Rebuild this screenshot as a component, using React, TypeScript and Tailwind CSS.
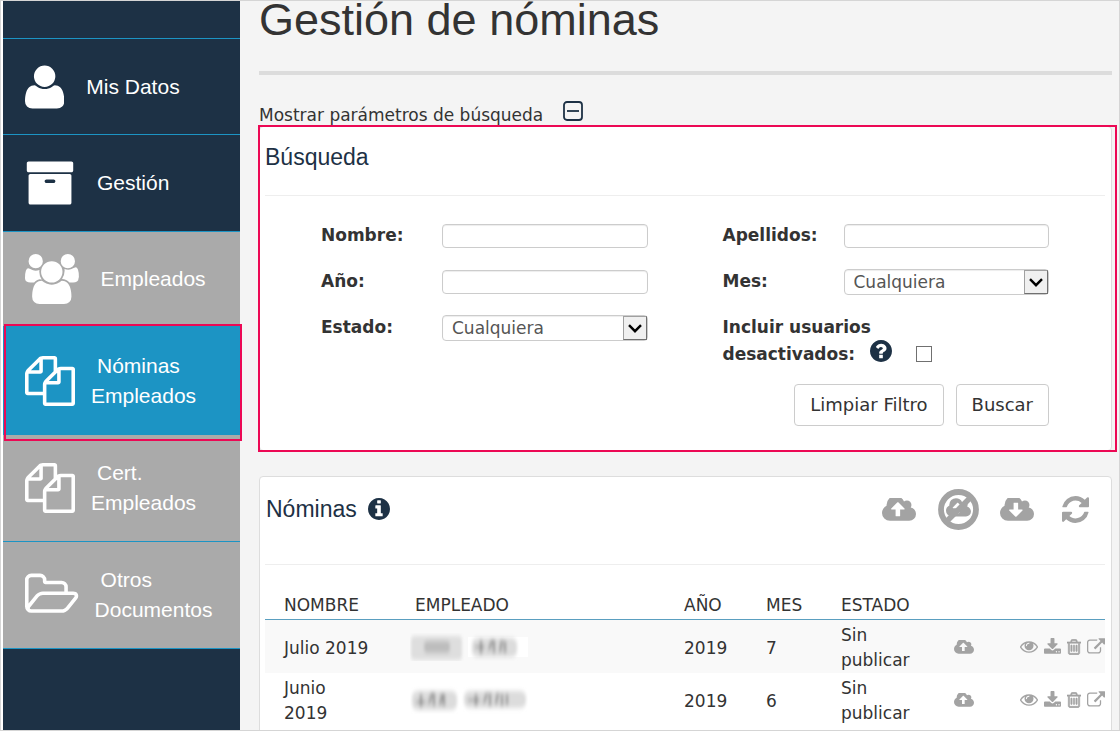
import React from "react";

type GlyphProps = { box?: string; d: string; className?: string };

function Glyph({ box = "0 0 1792 1792", d, className }: GlyphProps) {
  return (
    <svg viewBox={box} fill="currentColor" aria-hidden="true" className={className}>
      <path d={d} />
    </svg>
  );
}

const CLOUD =
  "m640 288q0 159-112.5 271.5t-271.5 112.5h-1088q-185 0-316.5-131.5t-131.5-316.5q0-130 70-240t188-165q-2-30-2-43 0-212 150-362t362-150q156 0 285.5 87t188.5 231q71-62 166-62 106 0 181 75t75 181q0 76-41 138 130 31 213.5 135.5t83.5 238.5z";
const DISC =
  "q0 209-103 385.5t-279.5 279.5-385.5 103-385.5-103-279.5-279.5-103-385.5 103-385.5 279.5-279.5 385.5-103 385.5 103 279.5 279.5 103 385.5z";

const paths = {
  user: "M1600 1405q0 120-73 189.5t-194 69.5h-874q-121 0-194-69.5t-73-189.5q0-53 3.5-103.5t14-109 26.5-108.5 43-97.5 62-81 85.5-53.5 111.5-20q9 0 42 21.5t74.5 48 108 48 133.5 21.5 133.5-21.5 108-48 74.5-48 42-21.5q61 0 111.5 20t85.5 53.5 62 81 43 97.5 26.5 108.5 14 109 3.5 103.5zm-320-893q0 159-112.5 271.5t-271.5 112.5-271.5-112.5-112.5-271.5 112.5-271.5 271.5-112.5 271.5 112.5 112.5 271.5z",
  archive:
    "M1088 832q0-26-19-45t-45-19h-256q-26 0-45 19t-19 45 19 45 45 19h256q26 0 45-19t19-45zm576-192v960q0 26-19 45t-45 19h-1408q-26 0-45-19t-19-45v-960q0-26 19-45t45-19h1408q26 0 45 19t19 45zm64-448v256q0 26-19 45t-45 19h-1536q-26 0-45-19t-19-45v-256q0-26 19-45t45-19h1536q26 0 45 19t19 45z",
  users:
    "M593 896q-162 5-265 128h-134q-82 0-138-40.5t-56-118.5q0-353 124-353 6 0 43.5 21t97.5 42.5 119 21.5q67 0 133-23-5 37-5 66 0 159 93 293zm1071 637q0 120-73 189.5t-194 69.5h-874q-121 0-194-69.5t-73-189.5q0-53 3.5-103.5t14-109 26.5-108.5 43-97.5 62-81 85.5-53.5 111.5-20q10 0 43 21.5t73 48 107 48 135 21.5 135-21.5 107-48 73-48 43-21.5q61 0 111.5 20t85.5 53.5 62 81 43 97.5 26.5 108.5 14 109 3.5 103.5zm-1024-1277q0 106-75 181t-181 75-181-75-75-181 75-181 181-75 181 75 75 181zm704 384q0 159-112.5 271.5t-271.5 112.5-271.5-112.5-112.5-271.5 112.5-271.5 271.5-112.5 271.5 112.5 112.5 271.5zm576 225q0 78-56 118.5t-138 40.5h-134q-103-123-265-128 93-134 93-293 0-29-5-66 66 23 133 23 59 0 119-21.5t97.5-42.5 43.5-21q124 0 124 353zm-128-609q0 106-75 181t-181 75-181-75-75-181 75-181 181-75 181 75 75 181z",
  files:
    "M1696 384q40 0 68 28t28 68v1216q0 40-28 68t-68 28h-960q-40 0-68-28t-28-68v-288h-544q-40 0-68-28t-28-68v-672q0-40 20-88t48-76l408-408q28-28 76-48t88-20h416q40 0 68 28t28 68v328q68-40 128-40h416zm-544 213l-299 299h299v-299zm-640-384l-299 299h299v-299zm196 647l316-316v-416h-384v416q0 40-28 68t-68 28h-416v640h512v-256q0-40 20-88t48-76zm956 804v-1152h-384v416q0 40-28 68t-68 28h-416v640h896z",
  folder:
    "M1845 931q0-35-53-35h-1088q-40 0-85.5 21.5t-71.5 52.5l-294 363q-18 24-18 40 0 35 53 35h1088q40 0 86-22t71-53l294-363q18-22 18-39zm-1141-163h768v-160q0-40-28-68t-68-28h-576q-40 0-68-28t-28-68v-64q0-40-28-68t-68-28h-320q-40 0-68 28t-28 68v853l256-315q44-53 116-87.5t140-34.5zm1269 163q0 62-46 120l-295 363q-43 53-116 87.5t-140 34.5h-1088q-92 0-158-66t-66-158v-960q0-92 66-158t158-66h320q92 0 158 66t66 158v32h544q92 0 158 66t66 158v160h192q54 0 99 24.5t67 70.5q15 32 15 68z",
  cloudUp:
    "M1280 864q0-14-9-23l-352-352q-9-9-23-9t-23 9l-351 351q-10 12-10 24 0 14 9 23t23 9h224v352q0 13 9.5 22.5t22.5 9.5h192q13 0 22.5-9.5t9.5-22.5v-352h224q13 0 22.5-9.5t9.5-22.5z" +
    CLOUD,
  cloudDown:
    "M1280 928q0-14-9-23t-23-9h-224v-352q0-13-9.5-22.5t-22.5-9.5h-192q-13 0-22.5 9.5t-9.5 22.5v352h-224q-13 0-22.5 9.5t-9.5 22.5q0 14 9 23l352 352q9 9 23 9t23-9l351-351q10-12 10-24zm0-64" +
    CLOUD,
  refresh:
    "M1639 1056q0 5-1 7-64 268-268 434.5t-478 166.5q-146 0-282.5-55t-243.5-157l-129 129q-19 19-45 19t-45-19-19-45v-448q0-26 19-45t45-19h448q26 0 45 19t19 45-19 45l-137 137q71 66 161 102t187 36q134 0 250-65t186-179q11-17 53-117 8-23 30-23h192q13 0 22.5 9.5t9.5 22.5zm25-800v448q0 26-19 45t-45 19h-448q-26 0-45-19t-19-45 19-45l138-138q-148-137-349-137-134 0-250 65t-186 179q-11 17-53 117-8 23-30 23h-199q-13 0-22.5-9.5t-9.5-22.5v-7q65-268 270-434.5t480-166.5q146 0 284 55.5t245 156.5l130-129q19-19 45-19t45 19 19 45z",
  info:
    "M1152 1376v-160q0-14-9-23t-23-9h-96v-512q0-14-9-23t-23-9h-320q-14 0-23 9t-9 23v160q0 14 9 23t23 9h96v320h-96q-14 0-23 9t-9 23v160q0 14 9 23t23 9h448q14 0 23-9t9-23zm-128-896v-160q0-14-9-23t-23-9h-192q-14 0-23 9t-9 23v160q0 14 9 23t23 9h192q14 0 23-9t9-23zm640 416" +
    DISC,
  question:
    "M1024 1376v-192q0-14-9-23t-23-9h-192q-14 0-23 9t-9 23v192q0 14 9 23t23 9h192q14 0 23-9t9-23zm256-672q0-88-55.5-163t-138.5-116-170-41q-243 0-371 213-15 24 8 42l132 100q7 6 19 6 16 0 25-12 53-68 86-92 34-24 86-24 48 0 85.5 26t37.5 59q0 38-20 61t-68 45q-63 28-115.5 86.5t-52.5 125.5v36q0 14 9 23t23 9h192q14 0 23-9t9-23q0-19 21.5-49.5t54.5-49.5q32-18 49-28.5t46-35 44.5-48 28-60.5 12.5-81zm384 192" +
    DISC,
  eye: "M1664 960q-152-236-381-353 61 104 61 225 0 185-131.5 316.5t-316.5 131.5-316.5-131.5-131.5-316.5q0-121 61-225-229 117-381 353 133 205 333.5 326.5t434.5 121.5 434.5-121.5 333.5-326.5zm-720-384q0-20-14-34t-34-14q-125 0-214.5 89.5t-89.5 214.5q0 20 14 34t34 14 34-14 14-34q0-86 61-147t147-61q20 0 34-14t14-34zm848 384q0 34-20 69-140 230-376.5 368.5t-499.5 138.5-499.5-139-376.5-368q-20-35-20-69t20-69q140-229 376.5-368t499.5-139 499.5 139 376.5 368q20 35 20 69z",
  download:
    "M1344 1344q0-26-19-45t-45-19-45 19-19 45 19 45 45 19 45-19 19-45zm256 0q0-26-19-45t-45-19-45 19-19 45 19 45 45 19 45-19 19-45zm128-224v320q0 40-28 68t-68 28h-1472q-40 0-68-28t-28-68v-320q0-40 28-68t68-28h465l135 136q58 56 136 56t136-56l136-136h464q40 0 68 28t28 68zm-325-569q17 41-14 70l-448 448q-18 19-45 19t-45-19l-448-448q-31-29-14-70 17-39 59-39h256v-448q0-26 19-45t45-19h256q26 0 45 19t19 45v448h256q42 0 59 39z",
  trash:
    "M704 736v576q0 14-9 23t-23 9h-64q-14 0-23-9t-9-23v-576q0-14 9-23t23-9h64q14 0 23 9t9 23zm256 0v576q0 14-9 23t-23 9h-64q-14 0-23-9t-9-23v-576q0-14 9-23t23-9h64q14 0 23 9t9 23zm256 0v576q0 14-9 23t-23 9h-64q-14 0-23-9t-9-23v-576q0-14 9-23t23-9h64q14 0 23 9t9 23zm128 724v-948h-896v948q0 22 7 40.5t14.5 27 10.5 8.5h832q3 0 10.5-8.5t14.5-27 7-40.5zm-672-1076h448l-48-117q-7-9-17-11h-317q-10 2-17 11zm928 32v64q0 14-9 23t-23 9h-96v948q0 83-47 143.5t-113 60.5h-832q-66 0-113-58.5t-47-141.5v-952h-96q-14 0-23-9t-9-23v-64q0-14 9-23t23-9h309l70-167q15-37 54-63t79-26h320q40 0 79 26t54 63l70 167h309q14 0 23 9t9 23z",
  external:
    "M1408 928v320q0 119-84.5 203.5t-203.5 84.5h-832q-119 0-203.5-84.5t-84.5-203.5v-832q0-119 84.5-203.5t203.5-84.5h704q14 0 23 9t9 23v64q0 14-9 23t-23 9h-704q-66 0-113 47t-47 113v832q0 66 47 113t113 47h832q66 0 113-47t47-113v-320q0-14 9-23t23-9h64q14 0 23 9t9 23zm384-864v512q0 26-19 45t-45 19-45-19l-176-176-652 652q-10 10-23 10t-23-10l-114-114q-10-10-10-23t10-23l652-652-176-176q-19-19-19-45t19-45 45-19h512q26 0 45 19t19 45z",
};

type NavProps = {
  icon: string;
  box?: string;
  lines: string[];
  className: string;
  children?: React.ReactNode;
};

function NavItem({ icon, box, lines, className, children }: NavProps) {
  return (
    <li className={`relative flex ${className}`}>
      <a href="#" className="flex w-full items-center gap-4 pl-[22px]">
        <Glyph d={icon} box={box} className="h-[50px] w-auto shrink-0" />
        <span className="indent-[6px] text-[21px] leading-[30px] text-white">
          {lines.map((line) => (
            <span key={line} className="block not-first:indent-0">
              {line}
            </span>
          ))}
        </span>
      </a>
      {children}
    </li>
  );
}

function Field({ label, id, children }: { label: string; id: string; children: React.ReactNode }) {
  return (
    <div className="grid min-h-[26px] grid-cols-[121px_minmax(0,1fr)] items-center">
      <label htmlFor={id} className="pb-[2px] leading-6 font-bold">
        {label}
      </label>
      {children}
    </div>
  );
}

function TextField({ label, id }: { label: string; id: string }) {
  return (
    <Field label={label} id={id}>
      <input
        id={id}
        type="text"
        className="h-6 w-full rounded border border-[#ccc] bg-white px-2 shadow-[inset_0_1px_1px_rgba(0,0,0,0.075)]"
      />
    </Field>
  );
}

function SelectField({ label, id }: { label: string; id: string }) {
  return (
    <Field label={label} id={id}>
      <div className="relative">
        <select
          id={id}
          className="block h-[26px] w-full appearance-none rounded border border-[#ccc] bg-white pl-[9px] leading-[24px] text-[#555] shadow-[inset_0_1px_1px_rgba(0,0,0,0.075)]"
        >
          <option>Cualquiera</option>
        </select>
        <span className="pointer-events-none absolute inset-y-px right-px flex w-6 items-center justify-center border border-[#707070] border-t-[#a0a0a0] border-l-[#a0a0a0] bg-[#f0f0f0]">
          <svg viewBox="0 0 14 9" className="w-[14px]" aria-hidden="true">
            <path d="M1 1.2 7 7.2 13 1.2" fill="none" stroke="#000" strokeWidth="2.4" />
          </svg>
        </span>
      </div>
    </Field>
  );
}

function Smudge({ id, alt }: { id: string; alt?: boolean }) {
  return (
    <svg viewBox="0 0 118 28" className="-ml-[5px] h-7 w-[118px]" aria-hidden="true">
      <defs>
        <filter id={id} x="-20%" y="-40%" width="140%" height="180%">
          <feGaussianBlur stdDeviation="1.6 2.4" />
        </filter>
      </defs>
      {!alt && <rect x="58" y="4" width="60" height="20" fill="#fff" />}
      <g filter={`url(#${id})`}>
        {alt ? (
          <>
            <rect x="2" y="5" width="45" height="19" rx="6" fill="#dcdcdc" />
            <rect x="54" y="5" width="62" height="17" rx="6" fill="#dcdcdc" />
            <path d="M11 8v13M6 16h10M19 18l3-11M24 7v13M30 19l2-11M34 8v12M66 8v12M58 14h12M74 17l3-10M80 7v13M86 18l2-11M92 8v12M97 8v11" fill="none" stroke="#808080" strokeWidth="2" />
          </>
        ) : (
          <>
            <rect x="1" y="3" width="51" height="24" rx="4" fill="#dedede" />
            <rect x="14" y="8" width="26" height="12" rx="4" fill="#bdbdbd" />
            <rect x="62" y="5" width="45" height="19" rx="6" fill="#dcdcdc" />
            <path d="M71 7v14M65 14h10M79 17l3-10M84 7v13M90 19l2-12M95 8v12" fill="none" stroke="#808080" strokeWidth="2" />
          </>
        )}
      </g>
    </svg>
  );
}

function IconButton({ label, children }: { label: string; children: React.ReactNode }) {
  return (
    <button type="button" aria-label={label} className="block shrink-0">
      {children}
    </button>
  );
}

const rows = [
  { name: "Julio 2019", year: "2019", month: "7", status: "Sin publicar" },
  { name: "Junio 2019", year: "2019", month: "6", status: "Sin publicar" },
];

export default function App() {
  return (
    <div className="flex h-screen overflow-hidden border border-[#d5d5d5] bg-white pl-[2px] font-['Liberation_Sans',Arial,sans-serif]">
      <nav className="w-[237px] shrink-0 bg-[#1d3145] text-white">
        <div className="h-[38px] border-b border-[#1c94c4]" />
        <ul>
          <NavItem icon={paths.user} box="192 0 1408 1792" lines={["Mis Datos"]} className="min-h-24 border-b border-[#1c94c4]" />
          <NavItem icon={paths.archive} lines={["Gestión"]} className="min-h-[97px] border-b border-[#1c94c4]" />
          <NavItem icon={paths.users} box="0 0 1920 1792" lines={["Empleados"]} className="min-h-[94px] bg-[#aaa]" />
          <NavItem icon={paths.files} lines={["Nóminas", "Empleados"]} className="z-10 min-h-[109px] bg-[#1c94c4]">
            <span className="pointer-events-none absolute -top-[2px] -right-[2px] -bottom-[6px] left-px border-2 border-[#ec0854]" />
          </NavItem>
          <NavItem icon={paths.files} lines={["Cert.", "Empleados"]} className="min-h-[107px] border-b border-[#1c94c4] bg-[#aaa]" />
          <NavItem icon={paths.folder} box="64 0 1920 1792" lines={["Otros", "Documentos"]} className="min-h-[107px] border-b border-[#1c94c4] bg-[#aaa]" />
        </ul>
      </nav>

      <main className="min-w-0 flex-1 bg-[#f4f4f4] pr-[7px] pl-[19px] font-['DejaVu_Sans',Verdana,sans-serif] text-[17px] text-[#333]">
        <h1 className="border-b-4 border-[#dcdcdc] pb-8 font-['Liberation_Sans',Arial,sans-serif] text-[45px] leading-[38px]">
          Gestión de nóminas
        </h1>

        <div className="flex h-[51px] items-end gap-5 pb-px">
          <span className="leading-[20px]">Mostrar parámetros de búsqueda</span>
          <button type="button" aria-label="Ocultar parámetros" className="mb-1 text-[#1d3145]">
            <svg viewBox="0 0 20 20" className="block size-5" fill="none" stroke="currentColor" aria-hidden="true">
              <rect x="1" y="1" width="18" height="18" rx="3" strokeWidth="1.8" />
              <path d="M4 10h12" strokeWidth="1.8" />
            </svg>
          </button>
        </div>

        <section className="relative rounded border border-[#ddd] bg-white pr-[6px] pb-[24px] pl-[5px]">
          <span className="pointer-events-none absolute -top-[2px] -right-[6px] -bottom-[2px] -left-[2px] border-2 border-[#ec0854]" />
          <h2 className="border-b border-[#eee] pt-4 pb-[24px] font-['Liberation_Sans',Arial,sans-serif] text-[23px] leading-[28px] text-[#1d3145]">
            Búsqueda
          </h2>
          <form className="pt-[27px] pr-[56px] pl-[56px]">
            <div className="grid grid-cols-2 gap-x-[75px]">
              <div className="flex flex-col gap-[20px]">
                <TextField label="Nombre:" id="nombre" />
                <TextField label="Año:" id="anio" />
                <SelectField label="Estado:" id="estado" />
              </div>
              <div className="flex flex-col gap-[20px]">
                <TextField label="Apellidos:" id="apellidos" />
                <SelectField label="Mes:" id="mes" />
                <div className="-mt-px flex items-end">
                  <label htmlFor="inactivos" className="w-[147px] leading-[27px] font-bold">
                    <span className="whitespace-nowrap">Incluir usuarios</span> desactivados:
                  </label>
                  <Glyph d={paths.question} box="128 128 1536 1536" className="mb-[6px] size-[22px] text-[#1d3145]" />
                  <input id="inactivos" type="checkbox" className="mb-[6px] ml-6 size-4 appearance-none border border-[#707070] bg-white" />
                </div>
              </div>
            </div>
            <div className="mt-4 flex justify-end gap-3 text-[18px]">
              <button type="button" className="rounded border border-[#ccc] bg-white px-[15px] py-2 leading-6">
                Limpiar Filtro
              </button>
              <button type="submit" className="rounded border border-[#ccc] bg-white px-[15px] py-2 leading-6">
                Buscar
              </button>
            </div>
          </form>
        </section>

        <section className="mt-[25px] rounded border border-[#ddd] bg-white pr-[6px] pb-10 pl-[5px]">
          <header className="flex h-[88px] items-start justify-between border-b border-[#eee] pr-4">
            <h2 className="flex items-center gap-[11px] pt-[18px] pl-px font-['Liberation_Sans',Arial,sans-serif] text-[23px] leading-[28px] text-[#1d3145]">
              Nóminas
              <Glyph d={paths.info} box="128 128 1536 1536" className="size-[22px]" />
            </h2>
            <div className="flex items-center pt-3 text-[#a3a3a3]">
              <IconButton label="Publicar">
                <Glyph d={paths.cloudUp} box="0 256 1920 1280" className="h-[23px] w-[34px]" />
              </IconButton>
              <span className="ml-[22px]">
                <IconButton label="Despublicar">
                  <svg viewBox="0 0 41 41" className="size-[41px]" aria-hidden="true">
                    <path transform="translate(8 7.5) scale(.013)" d={paths.cloudUp} fill="currentColor" />
                    <circle cx="20.5" cy="20.5" r="17.5" fill="none" stroke="currentColor" strokeWidth="5.8" />
                    <path d="M8.5 32.5 32.5 8.5" stroke="currentColor" strokeWidth="5.5" />
                  </svg>
                </IconButton>
              </span>
              <span className="ml-[21px]">
                <IconButton label="Descargar">
                  <Glyph d={paths.cloudDown} box="0 256 1920 1280" className="h-[23px] w-[34px]" />
                </IconButton>
              </span>
              <span className="ml-7">
                <IconButton label="Actualizar">
                  <Glyph d={paths.refresh} box="128 128 1536 1536" className="size-[27px]" />
                </IconButton>
              </span>
            </div>
          </header>

          <table className="mt-[26px] w-full table-fixed border-collapse text-left">
            <colgroup>
              <col className="w-[131px]" />
              <col />
              <col className="w-[82px]" />
              <col className="w-[75px]" />
              <col className="w-[113px]" />
              <col className="w-[66px]" />
              <col className="w-[104px]" />
            </colgroup>
            <thead>
              <tr className="border-b border-[#5a9fc0] leading-7">
                {["NOMBRE", "EMPLEADO", "AÑO", "MES", "ESTADO"].map((title) => (
                  <th key={title} scope="col" className="pl-[19px] font-normal">
                    {title}
                  </th>
                ))}
                <td />
                <td />
              </tr>
            </thead>
            <tbody>
              {rows.map((row, i) => (
                <tr key={row.name} className="leading-[25px] odd:bg-[#f9f9f9]">
                  <td className="pt-[3px] pr-6 pl-[19px]">{row.name}</td>
                  <td className="pl-[19px]">
                    <Smudge id={`smudge${i}`} alt={i === 1} />
                  </td>
                  <td className="pt-[3px] pl-[19px]">{row.year}</td>
                  <td className="pt-[3px] pl-[19px]">{row.month}</td>
                  <td className="pt-[3px] pr-4 pl-[19px]">{row.status}</td>
                  <td className="pl-[19px] text-[#a3a3a3]">
                    <IconButton label="Publicar nómina">
                      <Glyph d={paths.cloudUp} box="0 256 1920 1280" className="h-[14px] w-[20px]" />
                    </IconButton>
                  </td>
                  <td className="text-[#a3a3a3]">
                    <div className="flex items-center justify-end gap-[6px]">
                      <IconButton label="Ver">
                        <Glyph d={paths.eye} box="0 64 1792 1792" className="size-[18px]" />
                      </IconButton>
                      <IconButton label="Descargar nómina">
                        <Glyph d={paths.download} box="64 0 1664 1664" className="size-[17px]" />
                      </IconButton>
                      <IconButton label="Eliminar">
                        <Glyph
                          d={paths.trash}
                          box="192 128 1408 1536"
                          className="h-[16px] w-[14px] stroke-current stroke-[60]"
                        />
                      </IconButton>
                      <IconButton label="Abrir">
                        <Glyph d={paths.external} box="0 0 1792 1664" className="h-[17px] w-[18px]" />
                      </IconButton>
                    </div>
                  </td>
                </tr>
              ))}
            </tbody>
          </table>
        </section>
      </main>
    </div>
  );
}
